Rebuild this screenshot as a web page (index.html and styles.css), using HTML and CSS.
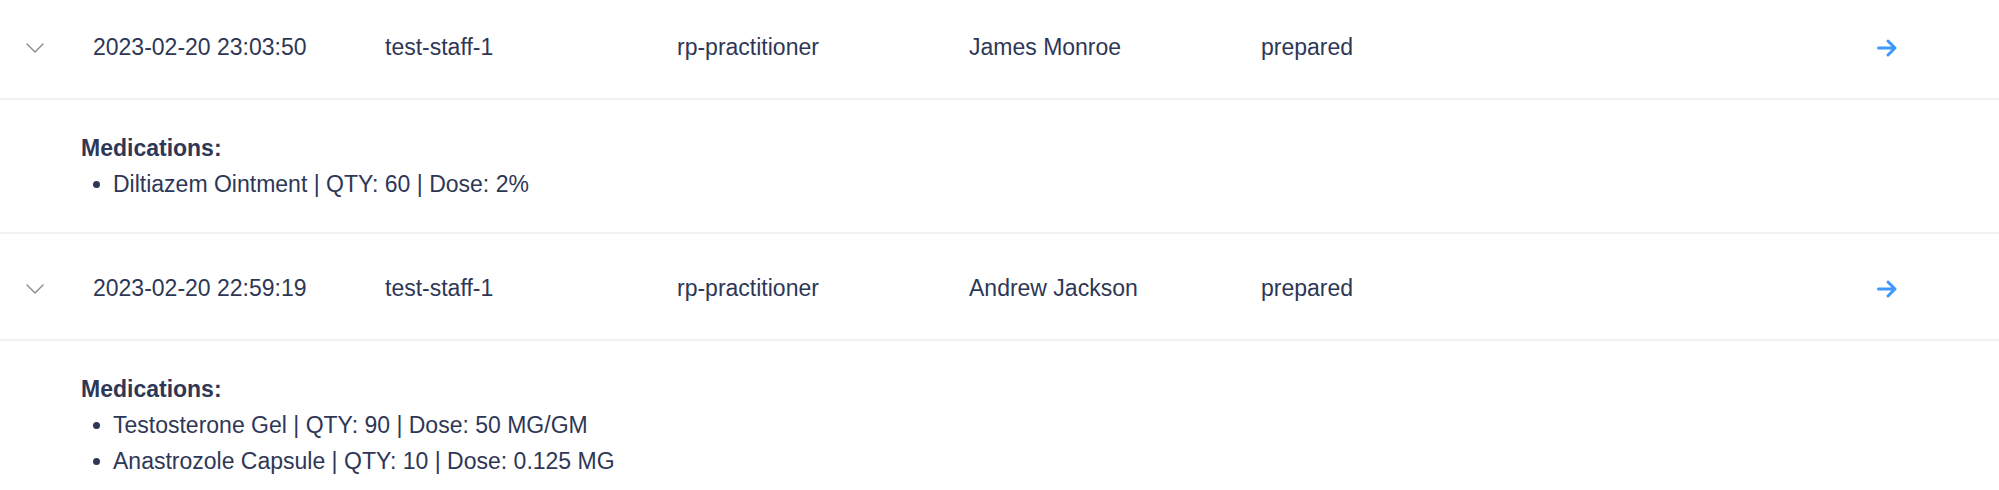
FILE: index.html
```html
<!DOCTYPE html>
<html>
<head>
<meta charset="utf-8">
<link rel="stylesheet" href="styles.css">
</head>
<body>
<div class="list">
  <div class="row">
    <div class="cell toggle">
      <svg class="chev" width="18" height="10" viewBox="0 0 18 10"><path d="M1 1 L9 9 L17 1" fill="none" stroke="#8a8a8a" stroke-width="1.4" stroke-linecap="round" stroke-linejoin="round"/></svg>
    </div>
    <div class="cell">2023-02-20 23:03:50</div>
    <div class="cell">test-staff-1</div>
    <div class="cell">rp-practitioner</div>
    <div class="cell">James Monroe</div>
    <div class="cell">prepared</div>
    <div class="cell action">
      <svg class="arrow" width="22" height="22" viewBox="0 0 22 22"><path d="M2.5 11 H19 M12 4 L19 11 L12 18" fill="none" stroke="#3d9afc" stroke-width="3" stroke-linecap="round" stroke-linejoin="round"/></svg>
    </div>
  </div>
  <div class="detail">
    <div class="detail-title">Medications:</div>
    <ul class="meds">
      <li>Diltiazem Ointment | QTY: 60 | Dose: 2%</li>
    </ul>
  </div>
  <div class="row">
    <div class="cell toggle">
      <svg class="chev" width="18" height="10" viewBox="0 0 18 10"><path d="M1 1 L9 9 L17 1" fill="none" stroke="#8a8a8a" stroke-width="1.4" stroke-linecap="round" stroke-linejoin="round"/></svg>
    </div>
    <div class="cell">2023-02-20 22:59:19</div>
    <div class="cell">test-staff-1</div>
    <div class="cell">rp-practitioner</div>
    <div class="cell">Andrew Jackson</div>
    <div class="cell">prepared</div>
    <div class="cell action">
      <svg class="arrow" width="22" height="22" viewBox="0 0 22 22"><path d="M2.5 11 H19 M12 4 L19 11 L12 18" fill="none" stroke="#3d9afc" stroke-width="3" stroke-linecap="round" stroke-linejoin="round"/></svg>
    </div>
  </div>
  <div class="detail">
    <div class="detail-title">Medications:</div>
    <ul class="meds">
      <li>Testosterone Gel | QTY: 90 | Dose: 50 MG/GM</li>
      <li>Anastrozole Capsule | QTY: 10 | Dose: 0.125 MG</li>
    </ul>
  </div>
</div>
</body>
</html>
```
FILE: styles.css
```css
* { box-sizing: border-box; }
html, body {
  margin: 0;
  padding: 0;
  background: #ffffff;
  overflow: hidden;
}
body {
  font-family: "Liberation Sans", Arial, Helvetica, sans-serif;
  font-size: 23px;
  color: #2e3756;
}
.list {
  margin-top: -7px;
}
.row {
  display: flex;
  align-items: center;
  height: 107px;
  padding-top: 4px;
  border-bottom: 2px solid #f0f0f5;
}
.cell {
  width: 292px;
  flex: none;
  white-space: nowrap;
}
.toggle {
  width: 93px;
  padding-left: 26px;
  display: flex;
  align-items: center;
}
.action {
  flex: 1;
  display: flex;
  justify-content: flex-end;
  padding-right: 101px;
}
.chev, .arrow { display: block; }
.detail {
  padding: 30px 0 30px 81px;
  border-bottom: 2px solid #f0f0f5;
  line-height: 36px;
}
.detail-title {
  font-weight: bold;
}
.meds {
  list-style: none;
  margin: 0;
  padding: 0;
}
.meds li {
  display: flex;
  align-items: center;
}
.meds li::before {
  content: "";
  width: 7px;
  height: 7px;
  border-radius: 50%;
  background: #2e3756;
  margin-left: 12px;
  margin-right: 13px;
  flex: none;
}
```
